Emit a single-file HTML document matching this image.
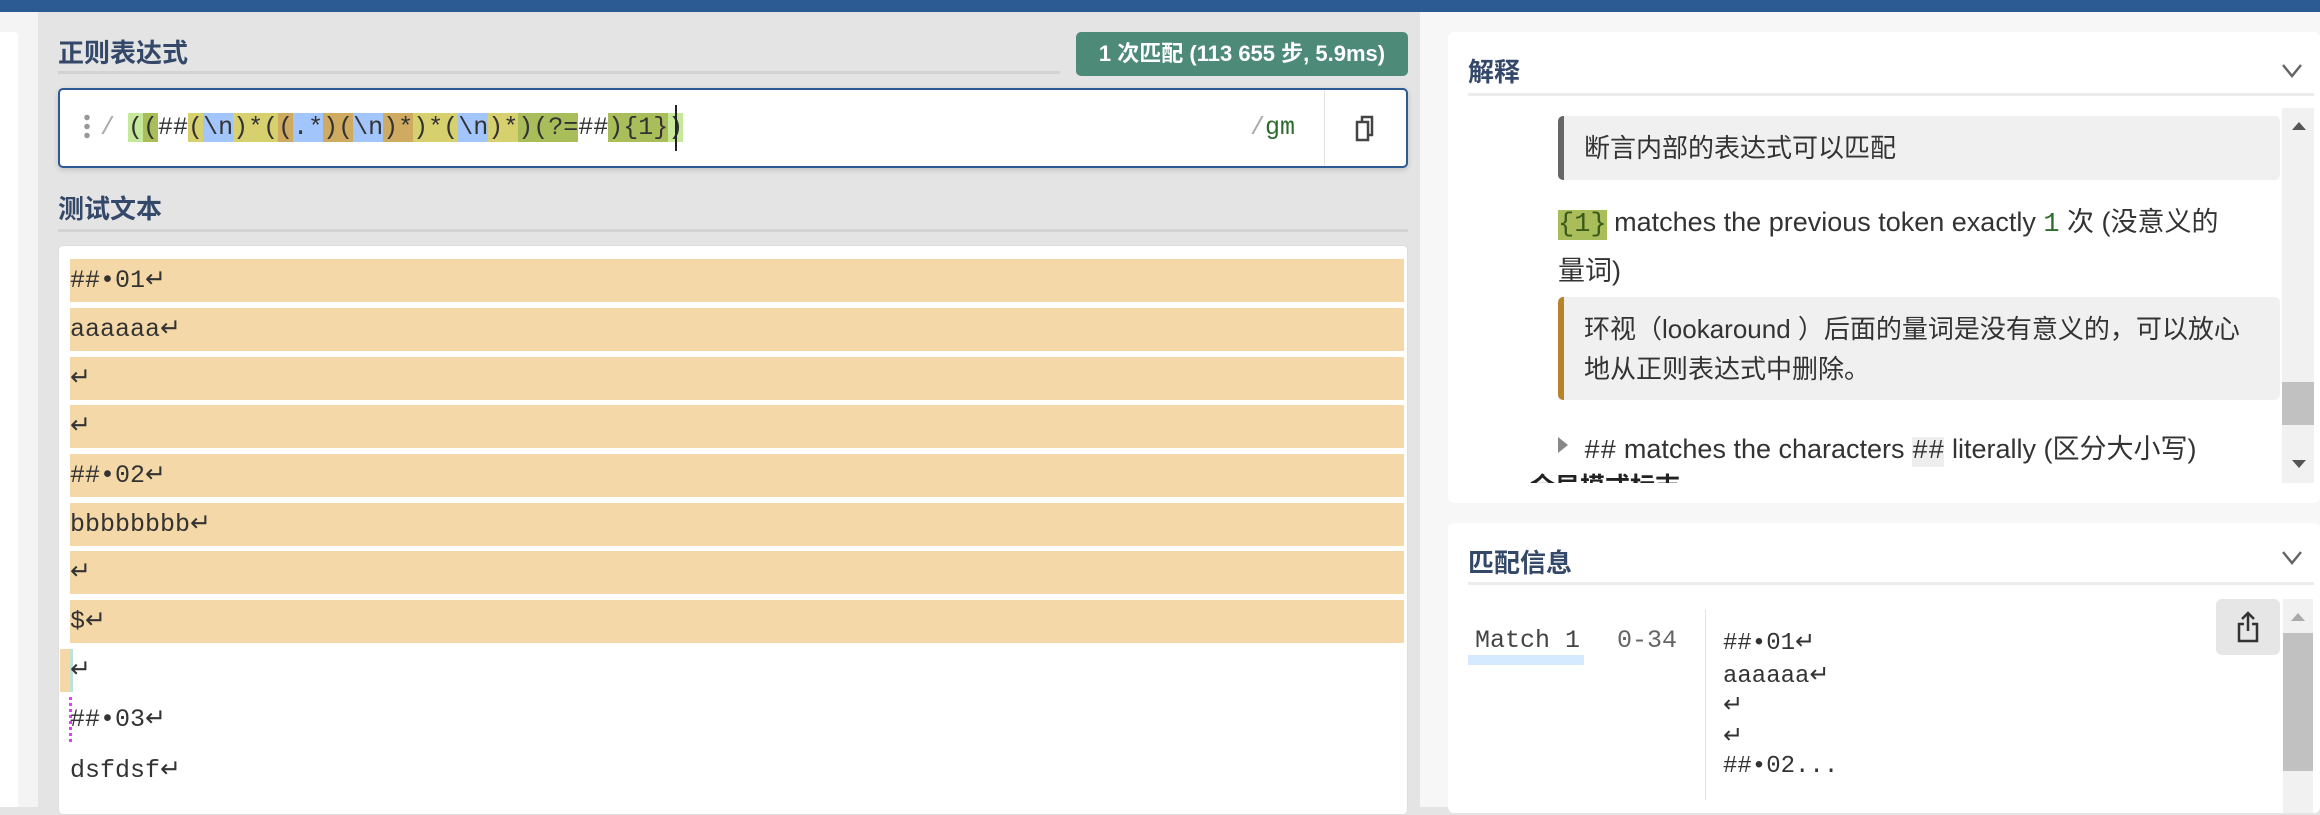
<!DOCTYPE html>
<html><head><meta charset="utf-8">
<style>
*{margin:0;padding:0;box-sizing:border-box}
body{width:2320px;height:807px;overflow:hidden;background:#e4e4e4;font-family:"Liberation Sans","Noto Sans CJK SC",sans-serif;position:relative}
.a{position:absolute}
.mono{font-family:"Liberation Mono","Noto Sans CJK SC",monospace}
.h{font-weight:bold;color:#34496a;font-size:26px}
.lg{background:#c6e89a}.ol{background:#a9bd5b}.ye{background:#d6d06e}.bl{background:#a2c5fb}.tn{background:#cfab62}
.row{position:absolute;left:70px;width:1334px;height:43px;background:#f5d8a8;font-size:25px;line-height:43px;color:#333;padding-left:0}
.ml{position:absolute;left:1723px;font-size:24px;color:#333}
</style></head><body>
<div class="a" style="left:0;top:0;width:2320px;height:12px;background:#2c5b94"></div>
<div class="a" style="left:0;top:12px;width:38px;height:795px;background:#f4f4f4"></div>
<div class="a" style="left:0;top:32px;width:18px;height:775px;background:#fff;border-radius:0 4px 0 0"></div>
<div class="a" style="left:1420px;top:12px;width:900px;height:795px;background:#f7f7f7"></div>

<div class="a h" style="left:58px;top:33px">正则表达式</div>
<div class="a" style="left:58px;top:71px;width:1002px;height:3px;background:#d3d3d3"></div>
<div class="a" style="left:1076px;top:32px;width:332px;height:44px;background:#4e8a78;border-radius:5px;color:#fff;font-weight:bold;font-size:22px;line-height:44px;text-align:center">1 次匹配 (113 655 步, 5.9ms)</div>

<div class="a" style="left:58px;top:88px;width:1350px;height:80px;background:#fff;border:2px solid #2c5b94;border-radius:5px;box-shadow:0 2px 6px rgba(0,0,0,.15)"></div>
<div class="a" style="left:84px;top:113px;width:6px;height:28px;background:radial-gradient(circle,#999 2.5px,transparent 3px) 0 0/6px 9px repeat-y"></div>
<div class="a mono" style="left:100px;top:113px;font-size:25px;line-height:30px;color:#aaa">/</div>
<div class="a mono" style="left:128px;top:113px;font-size:25px;line-height:30px;color:#333;white-space:pre"><span class="lg">(</span><span class="ol">(</span>##<span class="ye">(</span><span class="bl">\n</span><span class="ye">)*(</span><span class="tn">(</span><span class="bl">.*</span><span class="tn">)(</span><span class="bl">\n</span><span class="tn">)*</span><span class="ye">)*(</span><span class="bl">\n</span><span class="ye">)*</span><span class="ol">)(?=</span>##<span class="ol">){1}</span><span class="lg">)</span></div>
<div class="a" style="left:675px;top:105px;width:2px;height:46px;background:#222"></div>
<div class="a mono" style="left:1250px;top:113px;font-size:25px;line-height:30px;color:#aaa">/<span style="color:#2e6b2e">gm</span></div>
<div class="a" style="left:1324px;top:90px;width:1px;height:76px;background:#e2e2e2"></div>
<svg class="a" style="left:1355px;top:115px" width="22" height="28" viewBox="0 0 22 28"><rect x="2" y="7" width="11" height="18" fill="none" stroke="#444" stroke-width="2.5"/><path d="M7 7V2h10v18h-4" fill="none" stroke="#444" stroke-width="2.5"/></svg>

<div class="a h" style="left:58px;top:189px">测试文本</div>
<div class="a" style="left:58px;top:229px;width:1350px;height:3px;background:#d3d3d3"></div>
<div class="a" style="left:58px;top:245px;width:1350px;height:570px;background:#fff;border:1px solid #ddd;border-radius:5px"></div>
<div class="row mono" style="top:259px">##•01↵</div>
<div class="row mono" style="top:308px">aaaaaa↵</div>
<div class="row mono" style="top:357px">↵</div>
<div class="row mono" style="top:405px">↵</div>
<div class="row mono" style="top:454px">##•02↵</div>
<div class="row mono" style="top:503px">bbbbbbbb↵</div>
<div class="row mono" style="top:551px">↵</div>
<div class="row mono" style="top:600px">$↵</div>
<div class="a" style="left:60px;top:649px;width:10px;height:43px;background:#f5d8a8"></div>
<div class="a" style="left:70px;top:649px;width:3px;height:43px;background:#bfe3d8"></div>
<div class="a mono" style="left:70px;top:649px;font-size:25px;line-height:43px;color:#333">↵</div>
<div class="a" style="left:69px;top:697px;width:0;height:45px;border-left:3px dotted #e040fb"></div>
<div class="a mono" style="left:70px;top:697px;font-size:25px;line-height:45px;color:#333">##•03↵</div>
<div class="a mono" style="left:70px;top:748px;font-size:25px;line-height:45px;color:#333">dsfdsf↵</div>

<!-- right explanation -->
<div class="a" style="left:1448px;top:32px;width:872px;height:471px;background:#fff;border-radius:6px;overflow:hidden">
 <div class="a h" style="left:20px;top:20px">解释</div>
 <svg class="a" style="left:832px;top:28px" width="24" height="20"><path d="M3 5l9 11 9-11" fill="none" stroke="#666" stroke-width="2.5"/></svg>
 <div class="a" style="left:20px;top:61px;width:846px;height:3px;background:#ececec"></div>
 <div class="a" style="left:110px;top:84px;width:722px;height:64px;background:#f0f0f0;border-left:6px solid #666;border-radius:5px;font-size:26px;color:#333;line-height:64px;padding-left:20px">断言内部的表达式可以匹配</div>
 <div class="a" style="left:110px;top:167px;width:730px;font-size:27px;color:#333;line-height:46px;white-space:nowrap"><span class="mono ol" style="color:#3a5a1a">{1}</span> matches the previous token exactly <span class="mono" style="color:#2e6b2e">1</span> 次 (没意义的<br>量词)</div>
 <div class="a" style="left:110px;top:265px;width:722px;height:103px;background:#f0f0f0;border-left:6px solid #b8832a;border-radius:5px;font-size:26px;color:#333;line-height:40px;padding:12px 8px 0 20px;white-space:nowrap">环视（lookaround ）后面的量词是没有意义的，可以放心<br>地从正则表达式中删除。</div>
 <div class="a" style="left:110px;top:405px;width:0;height:0;border-left:10px solid #888;border-top:8px solid transparent;border-bottom:8px solid transparent"></div>
 <div class="a" style="left:136px;top:395px;font-size:27px;color:#333;white-space:nowrap"><span class="mono">##</span> matches the characters <span class="mono" style="background:#eee">##</span> literally (区分大小写)</div>
 <div class="a" style="left:82px;top:440px;font-size:25px;font-weight:bold;color:#222;height:11px;overflow:hidden;line-height:30px;white-space:nowrap">全局模式标志</div>
 <div class="a" style="left:834px;top:76px;width:32px;height:375px;background:#f1f1f1"></div>
 <div class="a" style="left:834px;top:350px;width:32px;height:43px;background:#c1c1c1"></div>
 <div class="a" style="left:844px;top:90px;border-left:7px solid transparent;border-right:7px solid transparent;border-bottom:8px solid #555"></div>
 <div class="a" style="left:844px;top:428px;border-left:7px solid transparent;border-right:7px solid transparent;border-top:8px solid #555"></div>
</div>

<!-- match info -->
<div class="a" style="left:1448px;top:523px;width:872px;height:290px;background:#fff;border-radius:6px;overflow:hidden">
 <div class="a h" style="left:20px;top:20px">匹配信息</div>
 <svg class="a" style="left:832px;top:24px" width="24" height="20"><path d="M3 5l9 11 9-11" fill="none" stroke="#666" stroke-width="2.5"/></svg>
 <div class="a" style="left:20px;top:59px;width:846px;height:3px;background:#ececec"></div>
 <div class="a" style="left:20px;top:132px;width:116px;height:10px;background:#d6eaff"></div>
 <div class="a mono" style="left:27px;top:103px;font-size:25px;color:#444">Match 1</div>
 <div class="a mono" style="left:169px;top:103px;font-size:25px;color:#666">0-34</div>
 <div class="a" style="left:257px;top:87px;width:1px;height:190px;background:#e2e2e2"></div>
 <div class="a" style="left:768px;top:76px;width:64px;height:56px;background:#e6e6e6;border-radius:6px"></div>
 <svg class="a" style="left:788px;top:88px" width="24" height="32"><path d="M12 2v18M6 8l6-6 6 6M8 13H3v17h18V13h-5" fill="none" stroke="#333" stroke-width="2.5"/></svg>
 <div class="a" style="left:835px;top:76px;width:30px;height:220px;background:#f1f1f1"></div>
 <div class="a" style="left:835px;top:110px;width:30px;height:138px;background:#c1c1c1"></div>
 <div class="a" style="left:843px;top:90px;border-left:7px solid transparent;border-right:7px solid transparent;border-bottom:8px solid #aaa"></div>
</div>
<div class="ml mono" style="top:627px">##•01↵</div>
<div class="ml mono" style="top:660px">aaaaaa↵</div>
<div class="ml mono" style="top:690px">↵</div>
<div class="ml mono" style="top:721px">↵</div>
<div class="ml mono" style="top:753px">##•02...</div>
</body></html>
